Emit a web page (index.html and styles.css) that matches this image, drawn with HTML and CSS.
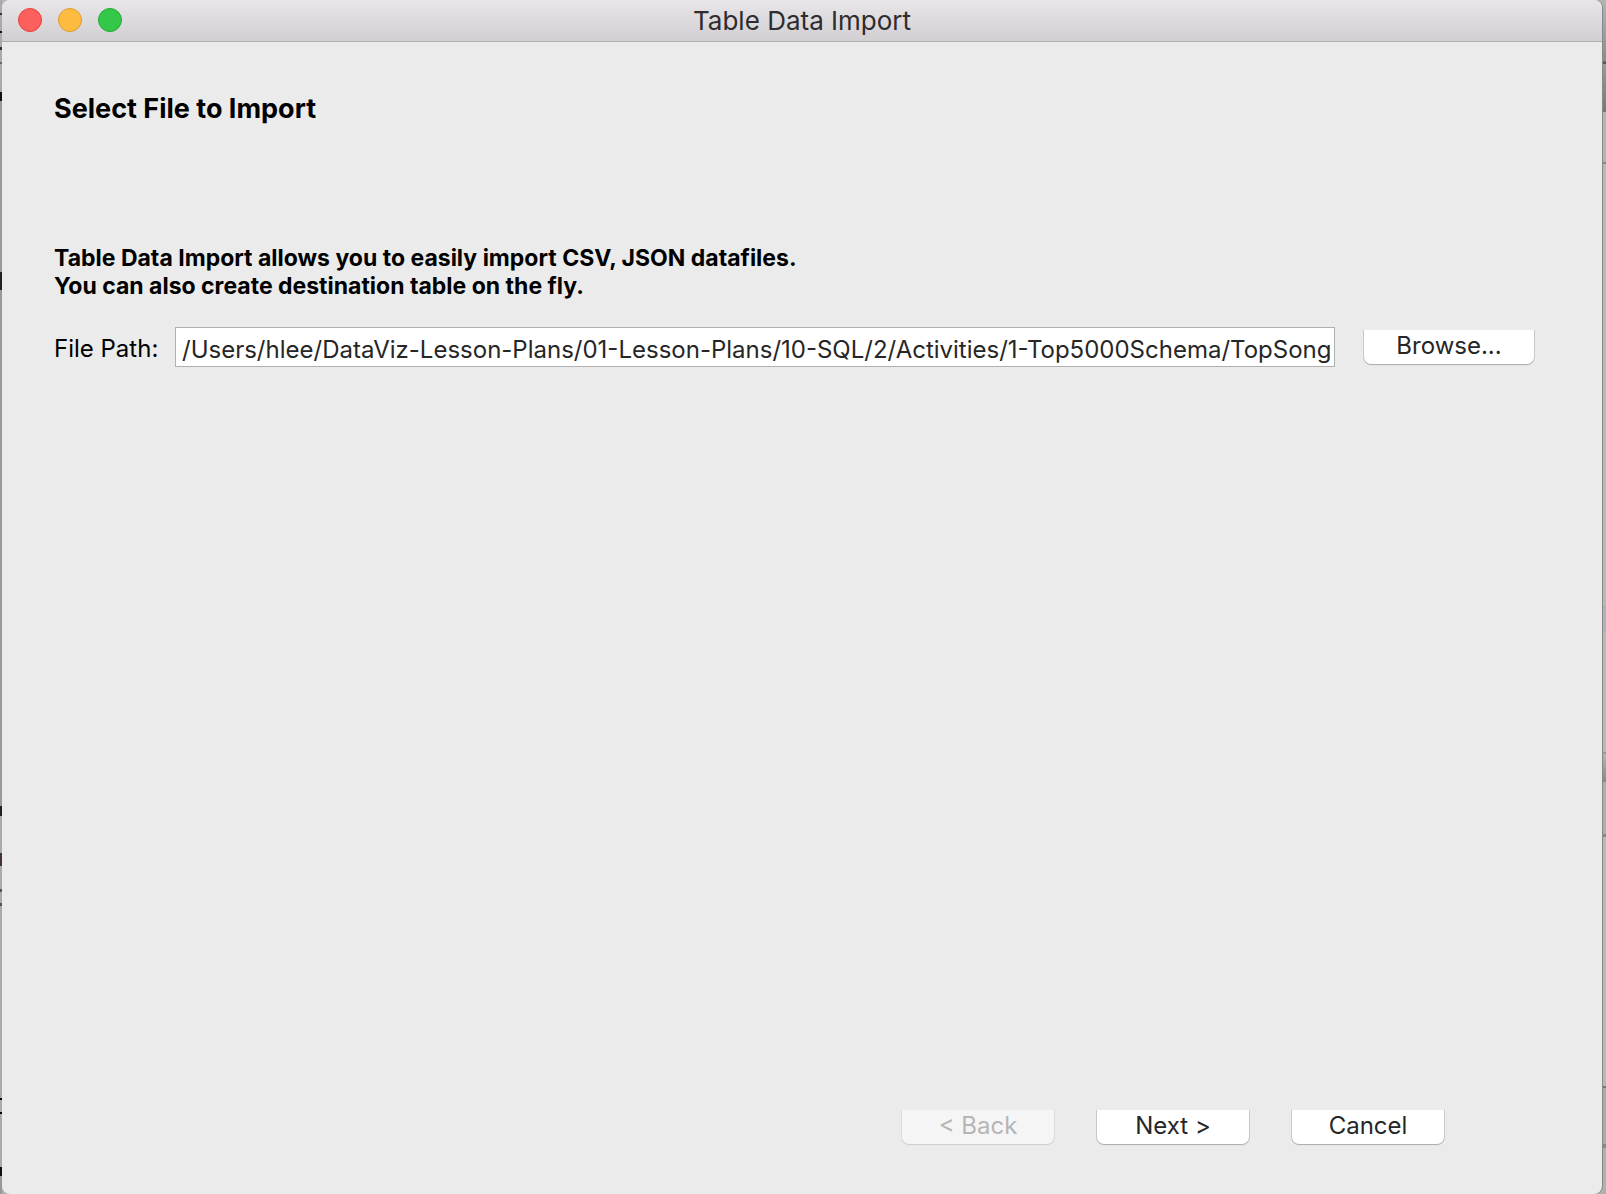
FILE: index.html
```html
<!DOCTYPE html>
<html lang="en">
<head>
<meta charset="utf-8">
<title>Table Data Import</title>
<link rel="stylesheet" href="styles.css">
</head>
<body>
<div class="window">
  <header class="titlebar">
    <div class="lights">
      <button class="light close" type="button" aria-label="Close"></button>
      <button class="light minimize" type="button" aria-label="Minimize"></button>
      <button class="light expand" type="button" aria-label="Zoom"></button>
    </div>
    <div class="title">Table Data Import</div>
  </header>
  <form class="content">
    <h1 class="heading">Select File to Import</h1>
    <p class="intro">Table Data Import allows you to easily import CSV, JSON datafiles.<br>You can also create destination table on the fly.</p>
    <div class="file-row">
      <label class="label" for="path">File Path:</label>
      <input class="path" id="path" type="text" value="/Users/hlee/DataViz-Lesson-Plans/01-Lesson-Plans/10-SQL/2/Activities/1-Top5000Schema/TopSongs.csv">
      <button class="button browse" type="button">Browse...</button>
    </div>
    <footer class="actions">
      <button class="button" type="button" disabled>&lt; Back</button>
      <button class="button" type="button">Next &gt;</button>
      <button class="button" type="button">Cancel</button>
    </footer>
  </form>
</div>
</body>
</html>
```
FILE: styles.css
```css
* { box-sizing: border-box; }

/* The desktop shows as a thin strip on each side of the window. */
body {
  margin: 0;
  min-height: 100vh;
  display: flex;
  padding: 0 4px 0 2px;
  background:
    linear-gradient(#aaa 13px, #333 13px 15px, #aaa 15px 31px, #111 31px 33px, #aaa 33px 47px, #333 47px 50px, #aaa 50px 62px, #666 62px 64px, #aaa 64px 92px, #111 92px 101px, #999 101px 272px, #222 272px 290px, #999 290px 806px, #222 806px 816px, #aaa 816px 853px, #433 853px 866px, #aaa 866px 889px, #555 889px 892px, #aaa 892px 903px, #555 903px 906px, #aaa 906px 1098px, #000 1098px 1100px, #aaa 1100px 1112px, #000 1112px 1114px, #aaa 1114px 1167px, #111 1167px 1176px, #999 1176px) left / 2px 100% no-repeat,
    linear-gradient(#b4b4b4, #8c8c8c 61px, #555 62px 64px, #999 64px, #777 112px, #b4b4b4 112px 162px, #888 162px 164px, #b8b8b8 164px 606px, #a9b4b8 606px 632px, #b8b8b8 632px 752px, #999 752px 754px, #b4b4b4 754px, #888 782px, #adadad 782px 834px, #888 834px 837px, #b8b8b8 837px 1086px, #777 1086px 1088px, #aaa 1088px 1144px, #888 1144px 1148px, #b0b0b0 1148px);
  font-family: Inter, "Liberation Sans", sans-serif;
  font-size: 24px;
  color: #000;
}

.window {
  flex: 1;
  min-width: 0;
  display: flex;
  flex-direction: column;
  background: #ebebeb;
  border-radius: 8px;
  box-shadow: 1px 0 0 #888;
}

.titlebar {
  display: grid;
  grid-template-columns: 1fr auto 1fr;
  align-items: center;
  height: 42px;
  padding: 0 16px 2px;
  background: linear-gradient(#e8e6e8, #d1cfd1);
  border-bottom: 1px solid #b0aeb0;
  border-radius: 8px 8px 0 0;
}

.lights { display: flex; gap: 16px; }

.light {
  width: 24px;
  height: 24px;
  padding: 0;
  border: 1px solid;
  border-radius: 50%;
}

.close { background: #fc605c; border-color: #e0443f; }
.minimize { background: #fdbc40; border-color: #dd9d33; }
.expand { background: #34c84a; border-color: #26a934; }

.title { padding-top: 2px; font-size: 26px; line-height: 32px; color: #2e2c2e; }

.content {
  flex: 1;
  display: flex;
  flex-direction: column;
  padding: 51px 68px 50px 52px;
}

.heading { margin: 0 0 115px; font-size: 27px; line-height: 32px; font-weight: 700; }
.intro { margin: 4px 0 27px; font-size: 23px; line-height: 28px; font-weight: 700; }

.file-row { display: flex; align-items: center; }
.label { width: 121px; padding-top: 2px; }

.path {
  flex: 1;
  min-width: 0;
  height: 40px;
  padding: 4px 2px 0 6px;
  border: 1px solid #b0b0b0;
  background: #fff;
  font: inherit;
  color: #262626;
}

.button {
  width: 152px;
  height: 34px;
  padding: 0 0 2px;
  border: 0;
  border-radius: 0 0 7px 7px;
  background: #fff;
  box-shadow: 0 1px 1px #aaa, 1px 0 0 #ccc, -1px 0 0 #ccc;
  font: inherit;
  line-height: 32px;
  color: #262626;
}

.button:disabled { background: #f5f5f5; color: #b5b5b5; box-shadow: 0 1px 1px #ccc, 1px 0 0 #ddd, -1px 0 0 #ddd; }
.browse { width: 170px; margin-left: 29px; }

.actions {
  display: flex;
  justify-content: flex-end;
  gap: 43px;
  margin-top: auto;
  padding-right: 90px;
}
```
